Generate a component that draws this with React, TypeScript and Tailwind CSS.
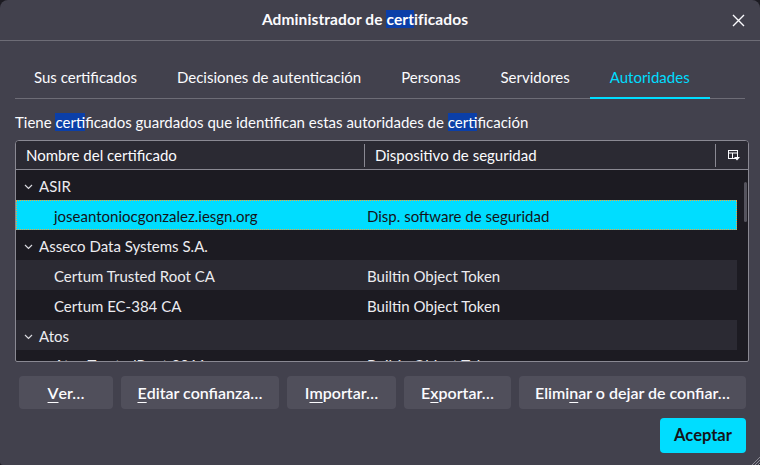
import React from "react";

const Hl = ({ children }: { children: React.ReactNode }) => (
  <span className="bg-[#0b3fa8] text-white">{children}</span>
);

const tabs = [
  "Sus certificados",
  "Decisiones de autenticación",
  "Personas",
  "Servidores",
  "Autoridades",
];

type Row = { kind: "group" | "item"; name: string; device?: string; selected?: boolean };

const rows: Row[] = [
  { kind: "group", name: "ASIR" },
  { kind: "item", name: "joseantoniocgonzalez.iesgn.org", device: "Disp. software de seguridad", selected: true },
  { kind: "group", name: "Asseco Data Systems S.A." },
  { kind: "item", name: "Certum Trusted Root CA", device: "Builtin Object Token" },
  { kind: "item", name: "Certum EC-384 CA", device: "Builtin Object Token" },
  { kind: "group", name: "Atos" },
  { kind: "item", name: "Atos TrustedRoot 2011", device: "Builtin Object Token" },
];

function Chevron() {
  return (
    <svg width="9" height="6" viewBox="0 0 9 6" className="mr-[6px]">
      <path d="M1 1l3.5 3.5L8 1" fill="none" stroke="#d8d8de" strokeWidth="1.2" />
    </svg>
  );
}

function ColumnPicker() {
  return (
    <svg width="12" height="11" viewBox="0 0 12 11">
      <rect x="0.5" y="0.5" width="9" height="8" fill="none" stroke="#fbfbfe" />
      <line x1="0.5" y1="3" x2="9.5" y2="3" stroke="#fbfbfe" />
      <line x1="4.5" y1="3" x2="4.5" y2="8.5" stroke="#fbfbfe" />
      <path d="M6 7h6l-3 3.5z" fill="#fbfbfe" />
    </svg>
  );
}

function Btn({ w, children }: { w: string; children: React.ReactNode }) {
  return (
    <button
      className={`${w} h-[33px] rounded-[4px] bg-[#504f5b] text-[#fbfbfe] font-semibold text-[16px] flex items-center justify-center`}
    >
      {children}
    </button>
  );
}

const U = ({ children }: { children: React.ReactNode }) => (
  <span className="underline underline-offset-[3px] decoration-1">{children}</span>
);

export default function App() {
  return (
    <div
      className="w-[760px] h-[465px] bg-[#1c1b22] overflow-hidden"
      style={{ fontFamily: "Lato, 'Noto Sans', sans-serif" }}
    >
      <div className="relative w-full h-full bg-[#42414d] rounded-t-[8px] rounded-b-[3px] flex flex-col text-[#fbfbfe]">
        {/* Title bar */}
        <div className="relative h-[41px] border-b border-[#6d6c76] flex items-center justify-center pr-[30px] shrink-0">
          <span className="font-bold text-[15.5px] tracking-[0.1px]">
            Administrador de <Hl>cert</Hl>ificados
          </span>
          <svg width="13" height="13" viewBox="0 0 13 13" className="absolute right-[15px] top-[14px]">
            <path d="M1 1l11 11M12 1L1 12" stroke="#fbfbfe" strokeWidth="1.4" />
          </svg>
        </div>

        {/* Tabs */}
        <div className="mt-[14px] ml-[15px] mr-[15px] border-b border-[#6d6c76] flex">
          {tabs.map((t, i) => {
            const active = i === tabs.length - 1;
            return (
              <div
                key={t}
                className={`h-[44px] px-5 pt-[2px] flex items-center text-[15px] border-b-2 -mb-px ${
                  i === 0 ? "-ml-px" : ""
                } ${active ? "text-[#00ddff] border-[#00ddff]" : "border-transparent"}`}
              >
                {t}
              </div>
            );
          })}
        </div>

        {/* Description */}
        <p className="mt-3 ml-[15px] text-[15px] leading-5 pt-px">
          Tiene <Hl>cert</Hl>ificados guardados que identifican estas autoridades de <Hl>cert</Hl>ificación
        </p>

        {/* Tree */}
        <div className="mt-[8px] ml-[15px] mr-[11px] h-[222px] border border-[#8a8993] rounded-t-[4px] rounded-b-[2px] bg-[#1c1b22] flex flex-col overflow-hidden text-[15px]">
          <div className="h-[29px] shrink-0 bg-[#2b2a33] border-b border-[#8a8993] flex items-center">
            <div className="w-[348px] h-full flex items-center pl-[10px]">Nombre del certificado</div>
            <div className="w-px h-[23px] bg-[#8a8993]" />
            <div className="w-[350px] h-full flex items-center pl-[10px]">Dispositivo de seguridad</div>
            <div className="w-px h-[23px] bg-[#8a8993]" />
            <div className="flex-1 flex items-center justify-center pl-1">
              <ColumnPicker />
            </div>
          </div>
          <div className="flex flex-1 min-h-0">
            <div className="w-[721px] flex flex-col">
              {rows.map((r, i) => (
                <div
                  key={r.name}
                  className={`h-[30px] shrink-0 flex items-center ${i === rows.length - 1 ? "" : "pt-[3px]"} ${
                    r.selected
                      ? "bg-[#00ddff] text-[#15141a] border border-dotted border-[#f0a63a]"
                      : i % 2 === 1
                      ? "bg-[#2b2a33] text-[#ececf0]"
                      : "text-[#ececf0]"
                  }`}
                >
                  <div
                    className={`w-[350px] flex items-center ${
                      r.kind === "group" ? "pl-[8px]" : "pl-[38px]"
                    } ${r.selected ? "-ml-px" : ""}`}
                  >
                    {r.kind === "group" && <Chevron />}
                    {r.name}
                  </div>
                  <div className="pl-[1px]">{r.device}</div>
                </div>
              ))}
            </div>
            <div className="flex-1 flex justify-end pr-[1px] pt-[12px]">
              <div className="w-[3px] h-[40px] rounded-full bg-[#55545e]" />
            </div>
          </div>
        </div>

        {/* Buttons */}
        <div className="mt-[14px] ml-[19px] flex gap-2">
          <Btn w="w-[94px]">
            <U>V</U>er…
          </Btn>
          <Btn w="w-[158px]">
            <U>E</U>ditar confianza…
          </Btn>
          <Btn w="w-[109px]">
            I<U>m</U>portar…
          </Btn>
          <Btn w="w-[107px]">
            E<U>x</U>portar…
          </Btn>
          <Btn w="w-[227px]">
            Elimi<U>n</U>ar o dejar de confiar…
          </Btn>
        </div>

        <div className="mt-[9px] mr-[14px] flex justify-end">
          <button className="w-[86px] h-[35px] rounded-[4px] bg-[#00ddff] text-[#15141a] font-bold text-[16.5px]">
            Aceptar
          </button>
        </div>

        <svg width="10" height="10" viewBox="0 0 10 10" className="absolute right-0 bottom-0">
          <path d="M10 2L2 10M10 5L5 10M10 8L8 10" stroke="#8a8993" strokeWidth="1" />
        </svg>
      </div>
    </div>
  );
}
